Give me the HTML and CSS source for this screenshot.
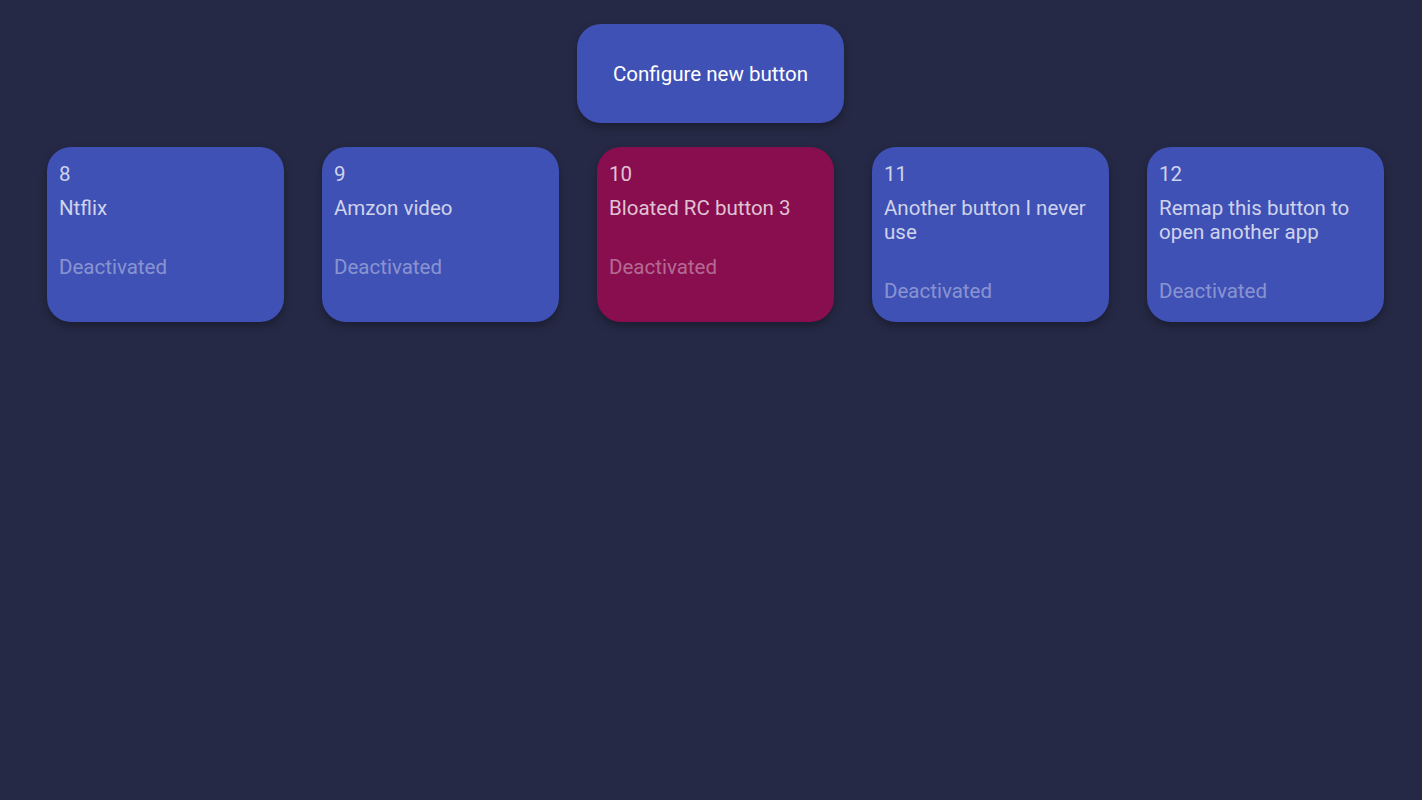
FILE: index.html
```html
<!DOCTYPE html>
<html>
<head>
<meta charset="utf-8">
<link rel="stylesheet" href="styles.css">
</head>
<body>
<div class="page">
  <div class="top">
    <div class="config-btn">Configure new button</div>
  </div>
  <div class="cards">
    <div class="card">
      <div class="num">8</div>
      <div class="title">Ntflix</div>
      <div class="status">Deactivated</div>
    </div>
    <div class="card">
      <div class="num">9</div>
      <div class="title">Amzon video</div>
      <div class="status">Deactivated</div>
    </div>
    <div class="card card-active">
      <div class="num">10</div>
      <div class="title">Bloated RC button 3</div>
      <div class="status">Deactivated</div>
    </div>
    <div class="card">
      <div class="num">11</div>
      <div class="title">Another button I never use</div>
      <div class="status">Deactivated</div>
    </div>
    <div class="card">
      <div class="num">12</div>
      <div class="title">Remap this button to open another app</div>
      <div class="status">Deactivated</div>
    </div>
  </div>
</div>
</body>
</html>
```
FILE: styles.css
```css
html, body {
  margin: 0;
  padding: 0;
  background: #252945;
  font-family: Roboto, "Noto Sans", sans-serif;
}
.page {
  width: 1422px;
  height: 800px;
  background: #252945;
}
.top {
  display: flex;
  justify-content: center;
  padding-top: 24px;
  padding-right: 1px;
}
.config-btn {
  width: 267px;
  height: 99px;
  box-sizing: border-box;
  background: #3f51b5;
  border-radius: 24px;
  color: #ffffff;
  font-size: 20.5px;
  display: flex;
  align-items: center;
  justify-content: center;
  padding-top: 1px;
  box-shadow: 0 4px 8px rgba(0, 0, 0, 0.3);
}
.cards {
  display: flex;
  gap: 38px;
  padding-left: 47px;
  padding-top: 24px;
}
.card {
  width: 237px;
  height: 175px;
  box-sizing: border-box;
  background: #3f51b5;
  border-radius: 24px;
  padding: 15px 12px 0 12px;
  box-shadow: 0 4px 8px rgba(0, 0, 0, 0.3);
  color: rgba(255, 255, 255, 0.75);
  font-size: 20.5px;
  line-height: 24px;
}
.card-active {
  background: #880e4f;
}
.title {
  margin-top: 10px;
}
.status {
  margin-top: 35px;
  color: rgba(255, 255, 255, 0.4);
}
```
